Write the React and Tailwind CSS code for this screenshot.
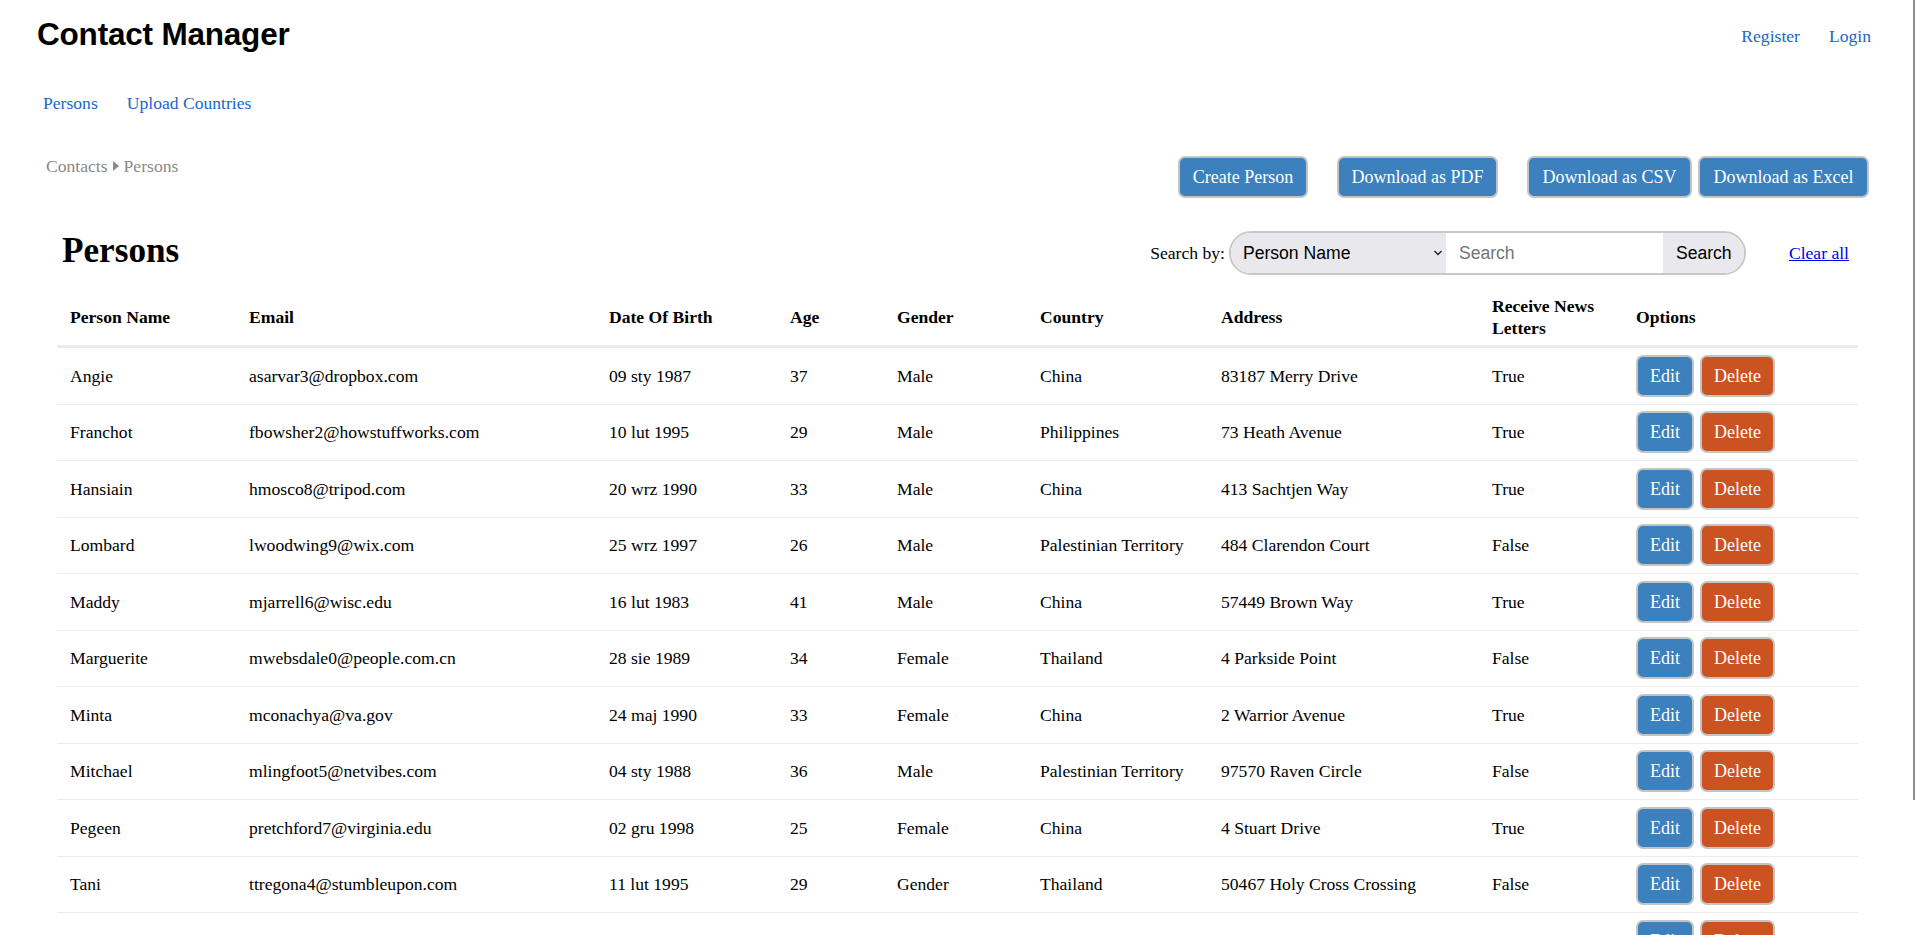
import React from "react";

const rows = [
  ["Angie", "asarvar3@dropbox.com", "09 sty 1987", "37", "Male", "China", "83187 Merry Drive", "True"],
  ["Franchot", "fbowsher2@howstuffworks.com", "10 lut 1995", "29", "Male", "Philippines", "73 Heath Avenue", "True"],
  ["Hansiain", "hmosco8@tripod.com", "20 wrz 1990", "33", "Male", "China", "413 Sachtjen Way", "True"],
  ["Lombard", "lwoodwing9@wix.com", "25 wrz 1997", "26", "Male", "Palestinian Territory", "484 Clarendon Court", "False"],
  ["Maddy", "mjarrell6@wisc.edu", "16 lut 1983", "41", "Male", "China", "57449 Brown Way", "True"],
  ["Marguerite", "mwebsdale0@people.com.cn", "28 sie 1989", "34", "Female", "Thailand", "4 Parkside Point", "False"],
  ["Minta", "mconachya@va.gov", "24 maj 1990", "33", "Female", "China", "2 Warrior Avenue", "True"],
  ["Mitchael", "mlingfoot5@netvibes.com", "04 sty 1988", "36", "Male", "Palestinian Territory", "97570 Raven Circle", "False"],
  ["Pegeen", "pretchford7@virginia.edu", "02 gru 1998", "25", "Female", "China", "4 Stuart Drive", "True"],
  ["Tani", "ttregona4@stumbleupon.com", "11 lut 1995", "29", "Gender", "Thailand", "50467 Holy Cross Crossing", "False"],
  ["Yance", "yackmant1@dell.com", "19 maj 1990", "33", "Female", "Philippines", "66 Lexington Circle", "False"],
];

const widths = ["w-[179px]", "w-[360px]", "w-[181px]", "w-[107px]", "w-[143px]", "w-[181px]", "w-[271px]", "w-[144px]", "w-[235px]"];
const headers = ["Person Name", "Email", "Date Of Birth", "Age", "Gender", "Country", "Address", "Receive News Letters", "Options"];

const btnBase =
  "h-[42px] flex items-center justify-center border-2 border-[#c4c4c4] rounded-[7px] text-white text-[18px] leading-[22px] font-['Liberation_Serif',serif] whitespace-nowrap";
const blue = " bg-[#3c80be]";
const red = " bg-[#cb5221]";

export default function App() {
  return (
    <div className="min-h-[935px] bg-white text-black font-['Liberation_Serif',serif] text-[17.6px] overflow-hidden">
      <div className="fixed right-[2px] top-0 w-[2px] h-[800px] bg-[#8c8c8c]" />

      <header className="flex justify-between items-start h-[70px]">
        <h1 className="pt-[16px] pl-[37px] text-[31.5px] leading-[36px] font-bold font-['Liberation_Sans',Arial,sans-serif] tracking-[-0.2px]">
          Contact Manager
        </h1>
        <nav className="pt-[24px] pr-[46px] flex gap-[29px] leading-[24px] text-[#1a66c8]">
          <a href="#">Register</a>
          <a href="#">Login</a>
        </nav>
      </header>

      <nav className="mt-[21px] h-[24px] leading-[24px] pl-[43px] flex gap-[29px] text-[#1a66c8]">
        <a href="#">Persons</a>
        <a href="#">Upload Countries</a>
      </nav>

      <div className="mt-[39px] flex justify-between items-start pr-[48px]">
        <div className="pl-[46px] leading-[24px] text-[#8a8a8a] flex items-center">
          <span>Contacts</span>
          <svg width="10" height="12" viewBox="0 0 10 12" className="mx-[3px]">
            <path d="M2 1 L8 6 L2 11 Z" fill="#8a8a8a" />
          </svg>
          <span>Persons</span>
        </div>
        <div className="mt-[2px] flex">
          <button className={btnBase + blue + " w-[130px]"}>Create Person</button>
          <button className={btnBase + blue + " w-[161px] ml-[29px]"}>Download as PDF</button>
          <button className={btnBase + blue + " w-[165px] ml-[29px]"}>Download as CSV</button>
          <button className={btnBase + blue + " w-[171px] ml-[6px]"}>Download as Excel</button>
        </div>
      </div>

      <div className="mt-[31px] flex justify-between items-start">
        <h2 className="pl-[62px] text-[35.2px] leading-[44px] font-bold">Persons</h2>
        <div className="mt-[2px] flex items-center pr-[68px]">
          <span className="mr-[4px]">Search by:</span>
          <div className="flex h-[44px] border-2 border-[#c8c8c8] rounded-full overflow-hidden font-['Liberation_Sans',Arial,sans-serif] text-[17.6px]">
            <div className="w-[215px] bg-[#e9e9ed] flex items-center justify-between pl-[12px] pr-[3px] text-black">
              <span>Person Name</span>
              <svg width="10" height="8" viewBox="0 0 10 8">
                <path d="M1.5 2 L5 5.5 L8.5 2" fill="none" stroke="#222" strokeWidth="1.4" />
              </svg>
            </div>
            <div className="w-[217px] bg-white flex items-center pl-[13px] text-[#757575]">Search</div>
            <div className="w-[81px] bg-[#e9e9ed] flex items-center pl-[13px] text-black">Search</div>
          </div>
          <a href="#" className="ml-[43px] text-[#0000ee] underline">Clear all</a>
        </div>
      </div>

      <table className="mt-[14px] ml-[57px] table-fixed border-collapse w-[1801px]">
        <colgroup>
          {widths.map((w, i) => (
            <col key={i} className={w} />
          ))}
        </colgroup>
        <thead>
          <tr className="border-b-[3px] border-[#ececec]">
            {headers.map((h, i) => (
              <th key={i} className="text-left align-middle font-bold pl-[13px] pr-[13px] py-[6px] leading-[22px]">
                {h}
              </th>
            ))}
          </tr>
        </thead>
        <tbody>
          {rows.map((r, ri) => (
            <tr key={ri} className="border-b border-[#ececec]">
              {r.map((c, ci) => (
                <td key={ci} className="pl-[13px] py-[7px] align-middle leading-[22px] whitespace-nowrap">
                  {c}
                </td>
              ))}
              <td className="pl-[13px] py-[6.75px] align-middle">
                <div className="flex gap-[6px]">
                  <button className={btnBase + blue + " w-[58px]"}>Edit</button>
                  <button className={btnBase + red + " w-[75px]"}>Delete</button>
                </div>
              </td>
            </tr>
          ))}
        </tbody>
      </table>
    </div>
  );
}
